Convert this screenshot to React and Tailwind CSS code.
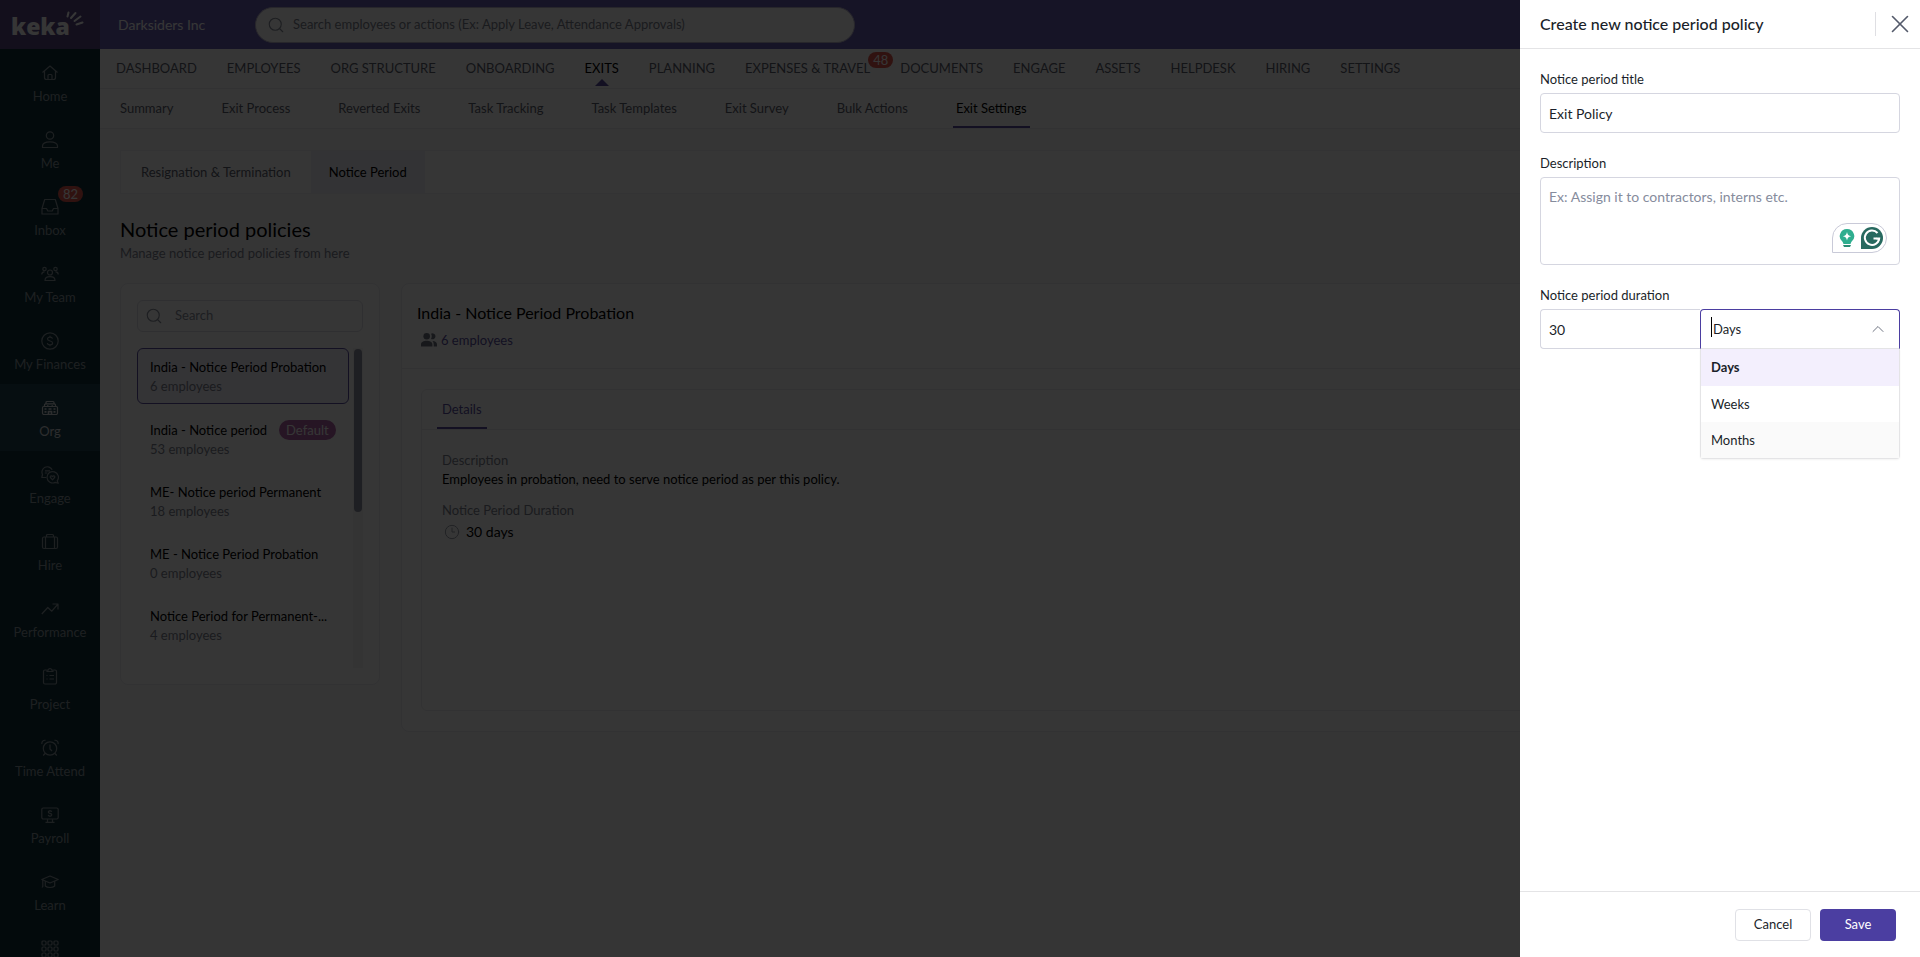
import React, { useState } from 'react';
import { Search, X, ChevronUp, Clock3 } from 'lucide-react';

// Sidebar icons, all drawn on an 18x18 grid
const icons = {
  home: (
    <>
      <path d="M1.5 8.5 9 2l7.500 6.500" />
      <path d="M3.500 7v6.500a2 2 0 0 0 2 2h7a2 2 0 0 0 2-2V7" />
      <path d="M7 15.500V11.500a1 1 0 0 1 1-1h2a1 1 0 0 1 1 1v4" />
    </>
  ),
  me: (
    <>
      <circle cx="9" cy="4.500" r="3.700" />
      <path d="M1.500 16.500v-1.500c0-2.500 3-4.200 7.500-4.200s7.500 1.700 7.500 4.200v1.500z" />
    </>
  ),
  inbox: (
    <>
      <path d="M3.700 1.500h10.600L17 10.500v5.500H1v-5.500z" />
      <path d="M1 10.500h4.500l1.300 2.500h4.400l1.300-2.500H17" />
    </>
  ),
  team: (
    <>
      <circle cx="9" cy="7.500" r="2.500" />
      <circle cx="3.500" cy="4" r="1.700" />
      <circle cx="14.500" cy="4" r="1.700" />
      <path d="M4 15.500c0-2.500 2-3.800 5-3.800s5 1.300 5 3.800z" />
      <path d="M.8 9.500c0-1.800 1-2.600 2.700-2.600M17.200 9.500c0-1.800-1-2.600-2.700-2.600" />
    </>
  ),
  finances: (
    <>
      <circle cx="9" cy="9" r="8.200" />
      <path d="M11.500 6.700C11.200 5.700 10.300 5.200 9 5.200c-1.500 0-2.500.7-2.500 1.800 0 2.700 5.100 1.300 5.100 4 0 1.100-1.100 1.900-2.600 1.900-1.400 0-2.500-.6-2.700-1.700M9 3.800v1.400M9 12.900v1.400" />
    </>
  ),
  org: (
    <>
      <path d="M5 5V3.500a1 1 0 0 1 1-1h6a1 1 0 0 1 1 1V5" />
      <path d="M3.500 8V6A1.200 1.200 0 0 1 4.700 4.800h8.600A1.200 1.200 0 0 1 14.500 6v2" />
      <path d="M2.700 7.500h12.600a1.200 1.200 0 0 1 1.200 1.200v5.300a1.500 1.500 0 0 1-1.500 1.500H3A1.500 1.500 0 0 1 1.500 14V8.700a1.200 1.200 0 0 1 1.200-1.200z" />
      <path d="M7.500 15.500v-3h3v3M3.500 10h2M7.500 10h3M12.500 10h2M3.500 12.800h2M12.500 12.800h2M6 7h1.500M10.500 7H12" strokeWidth="1.700" />
    </>
  ),
  engage: (
    <>
      <path d="M11.200 3.800A5.300 5.300 0 0 0 1.500 8.500L.8 11.500h4.400" />
      <path d="M4 4.800h5M3.800 7h2.500" />
      <path d="M16.200 14.800a5.700 5.700 0 1 0-2 1.600l3 .9z" />
      <path d="M11.500 13.800 9.400 11.500c-.8-1.200.9-2.400 2.100-1 1.200-1.400 2.900-.2 2.100 1z" />
    </>
  ),
  hire: (
    <>
      <rect x="1.500" y="4" width="15" height="11.500" rx="1.500" />
      <path d="M5.500 4V2.500a1 1 0 0 1 1-1h5a1 1 0 0 1 1 1V4M4.500 4v11.500M13.500 4v11.500" />
    </>
  ),
  performance: <path d="M.8 14l6-6.500 4 3.700L17 4M11.500 4H17v5.500" />,
  project: (
    <>
      <path d="M5.500 3h-1.500A1.500 1.500 0 0 0 2.500 4.500v11A1.500 1.500 0 0 0 4 17h10a1.500 1.500 0 0 0 1.500-1.500v-11A1.500 1.500 0 0 0 14 3h-1.500" />
      <path d="M6 4.500V3h1.500a1.500 1.500 0 0 1 3 0H12v1.500zM5.500 8.500h1M8.500 8.500h4.500M5.500 12h1M8.500 12h4.500" />
    </>
  ),
  time: (
    <>
      <circle cx="9" cy="9.500" r="6.700" />
      <path d="M9 5.500V10l2 2M1 5a3 3 0 0 1 3.500-3.700M17 5a3 3 0 0 0-3.500-3.700M4 14.500l-1.800 2M14 14.500l1.800 2" />
    </>
  ),
  payroll: (
    <>
      <rect x=".8" y="2" width="16.400" height="11" rx="1.500" />
      <path d="M6.500 13.200v2.800M11.500 13.200v2.800M4.500 16.300h9" />
      <path d="M10.700 5.800c-.2-.7-.8-1-1.700-1-1 0-1.700.5-1.700 1.200 0 1.800 3.500.9 3.500 2.800 0 .8-.8 1.300-1.800 1.300s-1.700-.5-1.800-1.200M9 4v.8M9 10.100v.8" />
    </>
  ),
  learn: (
    <>
      <path d="M9 3 17.200 6.500 9 10 .8 6.500z" />
      <path d="M4.300 8v5c2 2 7.400 2 9.400 0V8M1.800 7v6.500l-.8 1" />
    </>
  ),
  apps: (
    <>
      {[1, 7, 13].map((y) =>
        [1, 7, 13].map((x) => <rect key={`${x}-${y}`} x={x} y={y} width="4" height="4" rx="1" />)
      )}
    </>
  ),
};

const sidebarItems = [
  { id: 'home', label: 'Home' },
  { id: 'me', label: 'Me' },
  { id: 'inbox', label: 'Inbox', badge: 82 },
  { id: 'team', label: 'My Team' },
  { id: 'finances', label: 'My Finances' },
  { id: 'org', label: 'Org', active: true },
  { id: 'engage', label: 'Engage' },
  { id: 'hire', label: 'Hire' },
  { id: 'performance', label: 'Performance' },
  { id: 'project', label: 'Project', tall: true },
  { id: 'time', label: 'Time Attend' },
  { id: 'payroll', label: 'Payroll' },
  { id: 'learn', label: 'Learn' },
  { id: 'apps' },
];

const mainNav = [
  { label: 'DASHBOARD' },
  { label: 'EMPLOYEES' },
  { label: 'ORG STRUCTURE' },
  { label: 'ONBOARDING' },
  { label: 'EXITS', active: true },
  { label: 'PLANNING' },
  { label: 'EXPENSES & TRAVEL', badge: 48 },
  { label: 'DOCUMENTS' },
  { label: 'ENGAGE' },
  { label: 'ASSETS' },
  { label: 'HELPDESK' },
  { label: 'HIRING' },
  { label: 'SETTINGS' },
];

const subNav = [
  'Summary',
  'Exit Process',
  'Reverted Exits',
  'Task Tracking',
  'Task Templates',
  'Exit Survey',
  'Bulk Actions',
  'Exit Settings',
];

const policies = [
  { name: 'India - Notice Period Probation', count: 6 },
  { name: 'India - Notice period', count: 53, isDefault: true },
  { name: 'ME- Notice period Permanent', count: 18 },
  { name: 'ME - Notice Period Probation', count: 0 },
  { name: 'Notice Period for Permanent-...', count: 4 },
];

const units = ['Days', 'Weeks', 'Months'];

const Logo = () => (
  <a href="#" className="flex h-[49px] shrink-0 items-center bg-[#5a4a86] pl-[11px] text-white">
    <span className="pt-[2px] font-['Noto_Sans',sans-serif] text-[23px] leading-6 font-black">keka</span>
    <svg width="18" height="16" viewBox="0 0 18 16" className="-ml-1 mb-3" fill="none" stroke="currentColor" strokeWidth="2" strokeLinecap="round">
      <path d="M1.500 5.500 2.500 1.500M5 7l4.500-5M8.500 10l6-4.500M10.500 13.500l6-2" />
    </svg>
  </a>
);

const Sidebar = () => (
  <aside className="flex w-[100px] shrink-0 flex-col overflow-hidden bg-[#10303a]">
    <Logo />
    <nav className="flex flex-col">
      {sidebarItems.map((item) => (
        <a
          key={item.id}
          href="#"
          className={`relative flex shrink-0 flex-col items-center pt-[15px] ${
            item.tall ? 'h-[72px] gap-[10px]' : 'h-[67px] gap-[5px]'
          } ${item.active ? 'bg-[#1f4450] text-[#d0d4d8]' : 'text-[#8a979d]'}`}
        >
          <svg width="18" height="18" viewBox="0 0 18 18" fill="none" stroke="currentColor" strokeWidth="1.200" strokeLinejoin="round">
            {icons[item.id]}
          </svg>
          {item.label && <span className="text-[13px] leading-[18px]">{item.label}</span>}
          {item.badge && (
            <span className="absolute top-[3px] left-[58px] rounded-full bg-[#e2574c] px-[5px] text-[13px] leading-4 text-white">
              {item.badge}
            </span>
          )}
        </a>
      ))}
    </nav>
  </aside>
);

const TopBar = () => (
  <header className="flex h-[49px] shrink-0 items-center bg-[#6a5fb4] pl-[18px]">
    <span className="w-[137px] text-sm text-white">Darksiders Inc</span>
    <label className="flex h-9 w-[600px] items-center gap-2 rounded-full border border-[#b9b5cc] bg-white px-[11px]">
      <Search size={18} strokeWidth={1.5} className="text-[#8a8f9c]" />
      <input
        type="text"
        aria-label="Search employees or actions"
        placeholder="Search employees or actions (Ex: Apply Leave, Attendance Approvals)"
        className="min-w-0 flex-1 bg-transparent text-[13px] outline-none placeholder:text-[#7d828f]"
      />
    </label>
  </header>
);

const MainNav = () => (
  <nav className="flex h-10 shrink-0 items-center gap-[30px] border-b border-[#ececf0] bg-white pl-4 text-[13px] text-[#5c616d]">
    {mainNav.map((item) => (
      <a
        key={item.label}
        href="#"
        className={`relative flex h-full items-center whitespace-nowrap ${item.active ? 'text-black' : ''}`}
      >
        {item.label}
        {item.active && (
          <svg className="absolute bottom-[2px] left-1/2 -translate-x-1/2" width="14" height="7" viewBox="0 0 14 7">
            <path d="M7 0l7 7H0z" fill="#5a4fa0" />
          </svg>
        )}
        {item.badge && (
          <span className="absolute top-[3px] left-full -ml-[2px] rounded-full bg-[#e2574c] px-[5px] leading-4 text-white">{item.badge}</span>
        )}
      </a>
    ))}
  </nav>
);

const SubNav = () => (
  <nav className="flex h-10 shrink-0 gap-[42px] border-b border-[#ececf0] bg-white pl-[17px] text-[13px] text-[#5c616d]">
    {subNav.map((label) => (
      <a
        key={label}
        href="#"
        className={`flex items-center border-b-2 px-[3px] pt-[3px] whitespace-nowrap ${
          label === 'Exit Settings' ? 'border-[#5a4fa0] text-black' : 'border-transparent'
        }`}
      >
        {label}
      </a>
    ))}
  </nav>
);

const PolicyList = () => (
  <section className="w-[260px] shrink-0 rounded-lg border border-[#ececf0] bg-white p-4">
    <label className="flex h-8 items-center gap-3 rounded-md border border-[#dcdce6] pr-[9px] pl-[7px]">
      <Search size={18} strokeWidth={1.5} className="text-[#8a8f9c]" />
      <input type="text" aria-label="Search policies" placeholder="Search" className="min-w-0 flex-1 text-[13px] outline-none placeholder:text-[#8a8f9c]" />
    </label>
    <div className="mt-4 flex h-80 gap-1">
      <ul className="flex min-w-0 flex-1 flex-col gap-[6px] overflow-hidden">
        {policies.map((policy, index) => (
          <li key={policy.name}>
            <button
              type="button"
              className={`flex h-14 w-full flex-col justify-center rounded-md border px-3 pt-px text-left ${
                index === 0 ? 'mb-px border-[#5a4fa0] bg-[#f5f3ff]' : 'border-transparent'
              }`}
            >
              <span className="flex w-full items-center gap-3 text-[13px] leading-[19px] whitespace-nowrap text-black">
                {policy.name}
                {policy.isDefault && (
                  <span className="rounded-full bg-[#b264a8] px-[7px] leading-5 text-white">Default</span>
                )}
              </span>
              <span className="text-[13px] leading-[19px] text-[#7d828f]">{policy.count} employees</span>
            </button>
          </li>
        ))}
      </ul>
      <div className="w-[10px] bg-[#f3f3f3] p-px">
        <div className="h-[163px] rounded-full bg-[#8f93a3]" />
      </div>
    </div>
  </section>
);

const PolicyDetails = () => (
  <section className="h-[449px] min-w-0 flex-1 rounded-lg border border-[#ececf0] bg-white">
    <div className="flex h-[85px] flex-col gap-[5px] border-b border-[#ececf0] px-[15px] pt-[17px]">
      <h2 className="text-base leading-6 text-black">India - Notice Period Probation</h2>
      <a href="#" className="flex items-center gap-1 pl-1 text-[13px] leading-5 text-[#5a4fa0]">
        <svg width="16" height="14" viewBox="0 0 16 14" fill="#6f7482">
          <circle cx="5.700" cy="3.300" r="3.300" />
          <path d="M0 13.500v-2C0 9 2.500 7.800 5.700 7.800s5.700 1.200 5.700 3.700v2zM10 .7a3 3 0 1 1 0 5.200c1-1.700 1-3.500 0-5.200zM11.500 8.100c2.800.2 4.500 1.300 4.500 3.400v2h-3.300v-2c0-1.400-.4-2.500-1.200-3.400z" />
        </svg>
        6 employees
      </a>
    </div>
    <div className="mx-[19px] mt-5 h-[322px] rounded-md border border-[#ececf0]">
      <div className="flex h-10 border-b border-[#ececf0] px-[15px] text-[13px]">
        <button type="button" className="border-b-2 border-[#5a4fa0] px-[5px] pt-[2px] text-[#5a4fa0]">
          Details
        </button>
      </div>
      <dl className="px-5 pt-[21px] text-[13px] leading-[19px]">
        <dt className="text-[#7d828f]">Description</dt>
        <dd className="text-black">Employees in probation, need to serve notice period as per this policy.</dd>
        <dt className="mt-3 text-[#7d828f]">Notice Period Duration</dt>
        <dd className="mt-[2px] flex items-center gap-[6px] pl-[2px] text-sm leading-5 text-black">
          <Clock3 size={16} strokeWidth={1.5} className="text-[#9a9eaa]" />
          30 days
        </dd>
      </dl>
    </div>
  </section>
);

const GrammarBadge = () => (
  <div className="absolute right-[13px] bottom-3 flex h-[30px] w-[55px] items-center gap-[6px] rounded-full rounded-bl-none border border-[#c9cad8] bg-white pl-[6px]">
    <svg width="16" height="20" viewBox="0 0 16 20">
      <path d="M8 1a7.200 7.200 0 0 0-4.300 13l.8 2h7l.8-2A7.200 7.200 0 0 0 8 1z" fill="#2fae8f" />
      <path d="M8 4c.6 2.800 1.400 3.600 4.200 4.200C9.400 8.800 8.600 9.600 8 12.400c-.6-2.800-1.400-3.600-4.200-4.200C6.600 7.600 7.400 6.800 8 4z" fill="#fff" />
      <path d="M4 17h8l-1 2H5z" fill="#2a8b74" />
    </svg>
    <svg width="22" height="22" viewBox="0 0 22 22" fill="none">
      <path d="M11 0a11 11 0 0 1 0 22H0V11A11 11 0 0 1 11 0z" fill="#27695f" />
      <path d="M16.500 6A7.200 7.200 0 1 0 18.200 11.500H12.500" stroke="#fff" strokeWidth="2" />
      <path d="M15 11.500 18 12l-1.200 3.500" stroke="#fff" strokeWidth="1.300" />
    </svg>
  </div>
);

const PolicyDrawer = () => {
  const [title, setTitle] = useState('Exit Policy');
  const [duration, setDuration] = useState('30');
  const [unit, setUnit] = useState('Days');

  return (
    <div role="dialog" aria-labelledby="drawer-title" className="fixed inset-y-0 right-0 flex w-[400px] flex-col bg-white text-[#1b1f2a]">
      <div className="flex h-[49px] shrink-0 items-center justify-between border-b border-[#e4e4e6] pr-[5px] pl-5">
        <h2 id="drawer-title" className="text-base font-medium">Create new notice period policy</h2>
        <button type="button" aria-label="Close" className="flex h-6 items-center border-l border-[#dfdfe3] pl-[9px] text-[#545a6b]">
          <X size={30} strokeWidth={1.3} />
        </button>
      </div>

      <form className="flex-1 px-5 pt-[21px] text-[13px]">
        <label htmlFor="title" className="block leading-[18px]">Notice period title</label>
        <input
          id="title"
          type="text"
          value={title}
          onChange={(e) => setTitle(e.target.value)}
          className="mt-[5px] block h-10 w-full rounded border border-[#d5d6e0] px-2 text-sm outline-none"
        />

        <label htmlFor="description" className="mt-[21px] block leading-[18px]">Description</label>
        <div className="relative mt-[5px]">
          <textarea
            id="description"
            placeholder="Ex: Assign it to contractors, interns etc."
            className="block h-[88px] w-full resize-none rounded border border-[#d5d6e0] px-2 py-[9px] text-sm outline-none placeholder:text-[#868c9d]"
          />
          <GrammarBadge />
        </div>

        <label htmlFor="duration" className="mt-[21px] block leading-[18px]">Notice period duration</label>
        <div className="mt-[5px] flex">
          <input
            id="duration"
            type="text"
            value={duration}
            onChange={(e) => setDuration(e.target.value)}
            className="h-10 w-40 rounded-l border border-r-0 border-[#d5d6e0] px-2 text-sm outline-none"
          />
          <div className="relative flex-1">
            <select
              aria-label="Duration unit"
              value={unit}
              onChange={(e) => setUnit(e.target.value)}
              className="block h-10 w-full appearance-none rounded-t border border-[#4b3ea1] border-b-[#e4e4e6] bg-white px-3 pt-px text-[13px] outline-none"
            >
              {units.map((option) => (
                <option key={option}>{option}</option>
              ))}
            </select>
            <span className="absolute top-2 left-[11px] h-5 w-px bg-black" />
            <ChevronUp size={20} strokeWidth={1.2} className="pointer-events-none absolute top-[10px] right-3 text-[#6f7482]" />
            <ul role="listbox" className="absolute inset-x-0 top-full rounded-b border border-t-0 border-[#e4e4e6] bg-white shadow-xs">
              {units.map((option, index) => (
                <li
                  key={option}
                  role="option"
                  aria-selected={option === unit}
                  onClick={() => setUnit(option)}
                  className={`px-[10px] ${index === 0 ? 'h-[37px] leading-[37px]' : 'h-9 leading-9'} ${
                    option === unit ? 'bg-[#f3effd] font-bold' : ''
                  } ${index === 2 ? 'bg-[#fafafa]' : ''}`}
                >
                  {option}
                </li>
              ))}
            </ul>
          </div>
        </div>
      </form>

      <div className="flex h-[66px] shrink-0 justify-end gap-[9px] border-t border-[#e4e4e6] pt-[17px] pr-6 text-[13px]">
        <button type="button" className="h-8 w-[76px] rounded border border-[#e0e1e6]">Cancel</button>
        <button type="button" className="h-8 w-[76px] rounded bg-[#4b3ea1] text-white">Save</button>
      </div>
    </div>
  );
};

const App = () => (
  <div className="flex h-screen overflow-hidden bg-[#f9f9fb] font-['Lato',sans-serif]">
    <Sidebar />
    <div className="flex min-w-0 flex-1 flex-col">
      <TopBar />
      <MainNav />
      <SubNav />
      <main className="flex flex-col px-5 pt-[21px]">
        <div className="flex h-11 border border-[#f1f1f4] bg-white text-[13px]">
          <button type="button" className="px-5 pt-[2px] text-[#5c616d]">Resignation &amp; Termination</button>
          <button type="button" className="bg-[#efeff8] px-[18px] pt-[2px] text-black">Notice Period</button>
        </div>
        <h1 className="mt-[21px] text-[20px] leading-7 text-black">Notice period policies</h1>
        <p className="text-[13px] leading-5 text-[#7d828f]">Manage notice period policies from here</p>
        <div className="mt-5 flex items-start gap-[21px]">
          <PolicyList />
          <PolicyDetails />
        </div>
      </main>
    </div>
    <div className="fixed inset-0 bg-black/79" />
    <PolicyDrawer />
  </div>
);

export default App;
